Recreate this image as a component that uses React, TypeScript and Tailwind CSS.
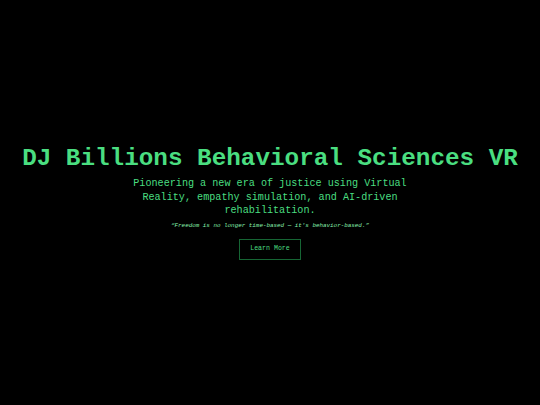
import React from "react";

export default function App() {
  return (
    <div className="w-[540px] h-[405px] bg-black flex flex-col items-center justify-center text-center font-['Liberation_Mono',monospace]">
      <h1 className="text-[24.3px] leading-[32px] font-bold text-[#4ade80]">
        DJ Billions Behavioral Sciences VR
      </h1>
      <p className="mt-[2px] w-[295px] text-[10.15px] leading-[13.5px] text-[#4ade80]">
        Pioneering a new era of justice using Virtual Reality, empathy simulation, and AI-driven rehabilitation.
      </p>
      <p className="mt-[4px] text-[5.9px] leading-[8px] italic text-[#86efac]">
        “Freedom is no longer time-based — it's behavior-based.”
      </p>
      <button className="mt-[9px] mb-[2px] w-[62px] h-[21px] border border-[#166534] text-[6.6px] text-[#4ade80] flex items-center justify-center font-['Liberation_Mono',monospace]">
        Learn More
      </button>
    </div>
  );
}
